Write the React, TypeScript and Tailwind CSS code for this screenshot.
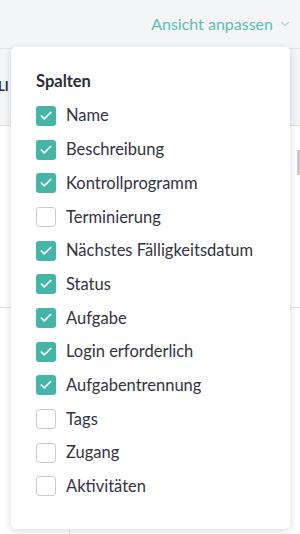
import { Check, ChevronDown } from "lucide-react";

const columns: { label: string; on: boolean }[] = [
  { label: "Name", on: true },
  { label: "Beschreibung", on: true },
  { label: "Kontrollprogramm", on: true },
  { label: "Terminierung", on: false },
  { label: "Nächstes Fälligkeitsdatum", on: true },
  { label: "Status", on: true },
  { label: "Aufgabe", on: true },
  { label: "Login erforderlich", on: true },
  { label: "Aufgabentrennung", on: true },
  { label: "Tags", on: false },
  { label: "Zugang", on: false },
  { label: "Aktivitäten", on: false },
];

export default function App() {
  return (
    <div className="relative h-[534px] w-[300px] overflow-hidden bg-[#f4f5f7] font-['Lato',sans-serif] text-[#2c2c38]">
      {/* page behind the menu */}
      <div className="flex h-[48px] items-center justify-end pr-[8px]">
        <button className="flex items-center gap-[5px] text-[16px] text-[#5bbfb3]">
          Ansicht anpassen
          <ChevronDown size={14} strokeWidth={1.5} />
        </button>
      </div>
      <div className="border-t border-[#e3e5e8]">
        <div className="flex h-[77px] items-center border-b border-[#dfe1e5]">
          <span className="-ml-[2px] text-[13px] font-bold">LI</span>
        </div>
        <div className="flex h-[182px] border-b border-[#dfe1e5] bg-white" />
        <div className="flex h-[226px]">
          <div className="w-[70px] border-r border-[#dfe1e5] bg-white" />
          <div className="flex-1 bg-white" />
        </div>
      </div>
      <div className="absolute right-0 top-[150px] h-[25px] w-[3px] bg-[#c8cacd]" />

      {/* dropdown */}
      <div className="absolute left-[11px] top-[47px] w-[279px] rounded-[5px] bg-white px-[25px] pb-[26px] pt-[24px] shadow-[0_2px_8px_rgba(0,0,0,0.14)]">
        <div className="mb-[8px] text-[16.5px] font-bold leading-[20px]">Spalten</div>
        <ul className="flex flex-col">
          {columns.map((c) => (
            <li key={c.label} className="flex h-[33.7px] items-center gap-[10px]">
              {c.on ? (
                <span className="flex h-[20px] w-[20px] shrink-0 items-center justify-center rounded-[3px] bg-[#45b5a8] text-white">
                  <Check size={14} strokeWidth={3} />
                </span>
              ) : (
                <span className="h-[20px] w-[20px] shrink-0 rounded-[3px] border border-[#c9ced6] bg-white" />
              )}
              <span className="text-[16.5px] text-[#33333f]">{c.label}</span>
            </li>
          ))}
        </ul>
      </div>
    </div>
  );
}
